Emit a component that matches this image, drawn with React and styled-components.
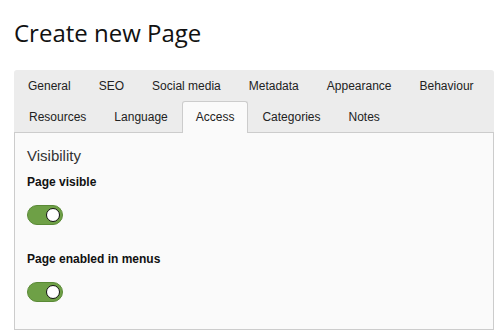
import React from "react";
import styled, { createGlobalStyle } from "styled-components";

const GlobalStyle = createGlobalStyle`
  html, body {
    margin: 0;
    padding: 0;
    background: #ffffff;
  }
  body {
    font-family: "Liberation Sans", Arial, sans-serif;
    color: #222;
  }
`;

const Page = styled.div`
  padding: 14px 5px 0 14px;
`;

const Title = styled.h1`
  margin: 0 0 19px 0;
  font-family: "Open Sans", "Noto Sans", sans-serif;
  font-weight: 400;
  font-size: 24px;
  line-height: 37px;
  color: #111;
`;

const Tabs = styled.div`
  background: #ececec;
  border-radius: 3px 3px 0 0;
`;

const TabRow = styled.div`
  display: flex;
  height: 31px;
  padding-left: ${(p) => (p.$first ? "0" : "1px")};
`;

const Tab = styled.div`
  display: flex;
  align-items: center;
  padding: 0 13px ${(p) => (p.$active ? "2px" : "0")};
  font-size: 12px;
  color: #222;
  box-sizing: border-box;
  border: 1px solid ${(p) => (p.$active ? "#cccccc" : "transparent")};
  border-bottom: none;
  border-radius: 3px 3px 0 0;
  background: ${(p) => (p.$active ? "#fafafa" : "transparent")};
  position: relative;
  z-index: 1;
  height: ${(p) => (p.$active ? "32px" : "31px")};
`;

const Panel = styled.div`
  background: #fafafa;
  border: 1px solid #cccccc;
  padding: 14px 12px 0 12px;
  height: 182px;
`;

const SectionTitle = styled.div`
  font-size: 15px;
  color: #333;
  margin-bottom: 11px;
`;

const Field = styled.div`
  margin-bottom: 27px;
`;

const Label = styled.div`
  font-size: 12px;
  font-weight: bold;
  color: #111;
  margin-bottom: 16px;
`;

const Switch = styled.div`
  width: 36px;
  height: 20px;
  box-sizing: border-box;
  border-radius: 10px;
  background: #6ea046;
  border: 1px solid #5a8a36;
  display: flex;
  align-items: center;
  justify-content: flex-end;
  padding-right: 2px;
`;

const Knob = styled.div`
  width: 12px;
  height: 12px;
  border-radius: 50%;
  background: #fff;
  border: 1px solid #111;
`;

const rowOne = ["General", "SEO", "Social media", "Metadata", "Appearance", "Behaviour"];
const rowTwo = ["Resources", "Language", "Access", "Categories", "Notes"];

export default function App() {
  return (
    <>
      <GlobalStyle />
      <Page>
        <Title>Create new Page</Title>
        <Tabs>
          <TabRow $first>
            {rowOne.map((t) => (
              <Tab key={t}>{t}</Tab>
            ))}
          </TabRow>
          <TabRow>
            {rowTwo.map((t) => (
              <Tab key={t} $active={t === "Access"}>
                {t}
              </Tab>
            ))}
          </TabRow>
        </Tabs>
        <Panel>
          <SectionTitle>Visibility</SectionTitle>
          <Field>
            <Label>Page visible</Label>
            <Switch>
              <Knob />
            </Switch>
          </Field>
          <Field>
            <Label>Page enabled in menus</Label>
            <Switch>
              <Knob />
            </Switch>
          </Field>
        </Panel>
      </Page>
    </>
  );
}
